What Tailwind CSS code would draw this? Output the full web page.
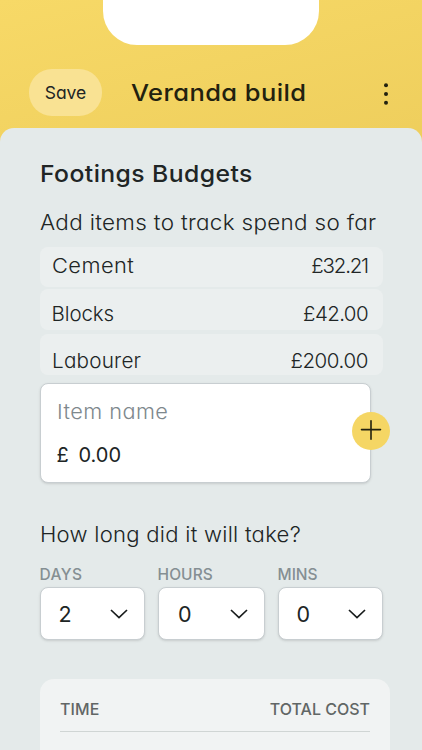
<!DOCTYPE html>
<html lang="en"><head><meta charset="utf-8"><title>Veranda build</title>
<script src="https://cdn.jsdelivr.net/npm/@tailwindcss/browser@4"></script></head>
<body class="w-[422px] h-[750px] overflow-hidden bg-[#f3d462] font-['Inter',sans-serif] text-[#202525] [font-feature-settings:'cv11']">
<main class="flex h-[750px] flex-col overflow-hidden bg-linear-165 from-[#f7d967] to-[#e0bc4a] to-80%">
<div class="mx-auto h-[45px] w-[216px] shrink-0 rounded-b-[34px] bg-white"></div>
<header class="flex h-[83px] shrink-0 items-start pt-6 pl-[29px]">
<button class="h-[47px] w-[73px] rounded-[23px] bg-[#f9e293] pt-0.5 text-[17.5px] whitespace-nowrap">Save</button>
<h1 class="ml-[29px] w-[180px] origin-left scale-x-[1.083] text-[23.5px] leading-[47px] font-medium tracking-[0.4px] whitespace-nowrap text-[#22210f]">Veranda build</h1>
<svg class="mt-3 ml-[69px] h-6 w-3" viewBox="0 0 12 24" fill="#22210f"><circle cx="6" cy="4.3" r="2"/><circle cx="6" cy="13" r="2"/><circle cx="6" cy="21.7" r="2"/></svg>
</header>
<section class="flex h-[622px] shrink-0 flex-col rounded-t-[14px] bg-[#e4eaea] px-10 pt-[30px] whitespace-nowrap">
<h2 class="-ml-[0.5px] h-8 shrink-0 origin-left scale-x-[1.052] text-[23.5px] leading-8 font-medium tracking-[0.4px]">Footings Budgets</h2>
<p class="mt-[17px] h-8 shrink-0 origin-left scale-x-[1.045] text-[21.5px] leading-[31px] font-light tracking-[0.3px]">Add items to track spend so far</p>
<ul class="mt-2 flex w-[343px] shrink-0 flex-col text-[20.5px] font-light">
<li class="flex h-10 justify-between rounded-lg bg-[#ebefef] pr-[15px] pl-[11.5px] leading-[38px]"><span class="origin-left scale-x-[1.065] tracking-[0.4px]">Cement</span><span class="tracking-[-1.2px]">£32.21</span></li>
<li class="mt-0.5 flex h-[41px] justify-between rounded-lg bg-[#ebefef] pr-[15px] pl-[11.5px] leading-[49px]"><span class="tracking-[-0.1px]">Blocks</span><span class="tracking-[-0.6px]">£42.00</span></li>
<li class="mt-1 flex h-[41px] justify-between rounded-lg bg-[#ebefef] pr-[15px] pl-[11.5px] leading-[54px]"><span class="origin-left scale-x-[1.01] tracking-[0.2px]">Labourer</span><span class="tracking-[-0.4px]">£200.00</span></li>
</ul>
<div class="relative mt-2 h-[100px] w-[331px] shrink-0 rounded-lg border border-[#c8ced1] bg-white pt-3 pl-[15.5px] text-[20px] shadow-sm">
<p class="h-8 origin-left scale-x-[1.06] text-[20.5px] leading-8 font-light tracking-[0.4px] text-[#7e888d]">Item name</p>
<p class="mt-[11px] flex h-8 leading-8"><span class="w-[22px]">£</span><span>0.00</span></p>
<button class="absolute top-[28px] left-[311px] flex size-[38px] items-center justify-center rounded-full bg-[#f5d664]"><svg class="size-[22px]" viewBox="0 0 22 22" stroke="#22210f" stroke-width="1.6" stroke-linecap="round"><path d="M11 .8v18.400M1.500 9.600h19"/></svg></button>
</div>
<p class="-ml-[0.5px] mt-9 h-8 shrink-0 origin-left scale-x-[1.027] text-[21.5px] leading-[31px] font-light tracking-[0.25px]">How long did it will take?</p>
<div class="mt-[15px] flex w-[343px] shrink-0 gap-[13px] text-[21.5px]">
<div class="w-[105px]"><div class="-ml-[0.5px] h-[21px] text-[15.5px] leading-[17px] font-medium tracking-[0.4px] text-[#858f93]">DAYS</div><div class="flex h-[53px] items-center justify-between rounded-lg border border-[#c8ced1] bg-white pt-px pr-4 pl-[17.5px] shadow-sm"><span>2</span><svg class="h-3 w-[18px]" viewBox="0 0 18 12" fill="none" stroke="#181c1c" stroke-width="1.7"><path d="m1 2 8 7.500L17 2"/></svg></div></div>
<div class="w-[107px]"><div class="-ml-[0.5px] h-[21px] text-[15.5px] leading-[17px] font-medium tracking-[0.1px] text-[#858f93]">HOURS</div><div class="flex h-[53px] items-center justify-between rounded-lg border border-[#c8ced1] bg-white pt-px pr-4 pl-[19px] shadow-sm"><span>0</span><svg class="h-3 w-[18px]" viewBox="0 0 18 12" fill="none" stroke="#181c1c" stroke-width="1.7"><path d="m1 2 8 7.500L17 2"/></svg></div></div>
<div class="w-[105px]"><div class="-ml-[0.5px] h-[21px] text-[15.5px] leading-[17px] font-medium text-[#858f93]">MINS</div><div class="flex h-[53px] items-center justify-between rounded-lg border border-[#c8ced1] bg-white pt-px pr-4 pl-[17.5px] shadow-sm"><span>0</span><svg class="h-3 w-[18px]" viewBox="0 0 18 12" fill="none" stroke="#181c1c" stroke-width="1.7"><path d="m1 2 8 7.500L17 2"/></svg></div></div>
</div>
<div class="mt-[39px] h-[90px] w-[350px] shrink-0 rounded-t-[14px] bg-[#f1f3f3] px-5 pt-3">
<div class="flex h-[41px] justify-between border-b border-[#d0d5d4] text-[16px] leading-9 font-medium text-[#616665]"><span class="tracking-[0.1px]">TIME</span><span>TOTAL COST</span></div>
</div>
</section>
</main>
</body></html>
